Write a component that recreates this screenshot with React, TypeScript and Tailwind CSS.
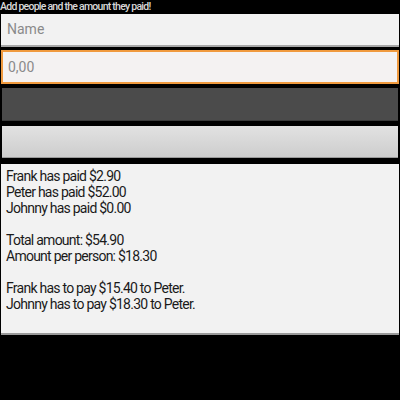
export default function App() {
  const lines = [
    'Frank has paid $2.90',
    'Peter has paid $52.00',
    'Johnny has paid $0.00',
    '',
    'Total amount: $54.90',
    'Amount per person: $18.30',
    '',
    'Frank has to pay $15.40 to Peter.',
    'Johnny has to pay $18.30 to Peter.',
  ];

  return (
    <div className="w-[400px] h-[400px] bg-black overflow-hidden" style={{ fontFamily: 'Roboto, "Liberation Sans", sans-serif' }}>
      <div className="h-[13px] text-[10.5px] leading-[13px] tracking-[-0.75px] font-medium text-[#d8d8d8]">Add people and the amount they paid!</div>

      <div className="mt-[1px] mx-[1px] h-[33px] bg-[#f2f2f2] border-b-[2px] border-[#a8a8a8] flex items-center px-[6px] text-[14px] text-[#8a8a8a]">
        Name
      </div>

      <div className="mt-[3px] mx-[1px] h-[34px] bg-[#f4f2f2] border-[2px] border-[#f09a3e] flex items-center px-[5px] text-[14px] text-[#8a8a8a]">
        0,00
      </div>

      <div className="mt-[4px] mx-[2px] h-[33px] bg-[#4b4b4b] border-b border-[#3a3a3a]" />

      <div className="mt-[5px] mx-[2px] h-[32px] bg-gradient-to-b from-[#e2e2e2] to-[#cdcdcd] border-b border-[#9a9a9a]" />

      <div className="mt-[6px] mx-[1px] h-[171px] bg-[#f2f2f2] border-b-[2px] border-[#9a9a9a] px-[5px] pt-[4px] text-[14px] leading-[16px] tracking-[-0.75px] text-[#1a1a1a]">
        {lines.map((l, i) => (
          <div key={i} className="h-[16px]">{l}</div>
        ))}
      </div>
    </div>
  );
}
